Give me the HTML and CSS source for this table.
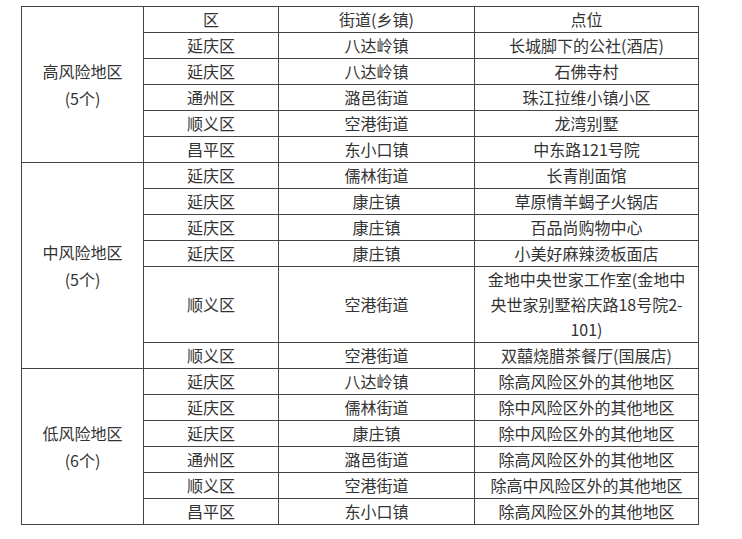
FILE: index.html
```html
<!DOCTYPE html>
<html lang="zh-CN">
<head>
<meta charset="utf-8">
<link rel="stylesheet" href="styles.css">
</head>
<body>
<div class="wrap">
<table class="risk">
<colgroup>
<col class="c1"><col class="c2"><col class="c3"><col class="c4">
</colgroup>
<tbody>
<tr><td rowspan="6" class="level">高风险地区<br>(5个)</td><td>区</td><td>街道(乡镇)</td><td>点位</td></tr>
<tr><td>延庆区</td><td>八达岭镇</td><td>长城脚下的公社(酒店)</td></tr>
<tr><td>延庆区</td><td>八达岭镇</td><td>石佛寺村</td></tr>
<tr><td>通州区</td><td>潞邑街道</td><td>珠江拉维小镇小区</td></tr>
<tr><td>顺义区</td><td>空港街道</td><td>龙湾别墅</td></tr>
<tr><td>昌平区</td><td>东小口镇</td><td>中东路121号院</td></tr>
<tr><td rowspan="6" class="level">中风险地区<br>(5个)</td><td>延庆区</td><td>儒林街道</td><td>长青削面馆</td></tr>
<tr><td>延庆区</td><td>康庄镇</td><td>草原情羊蝎子火锅店</td></tr>
<tr><td>延庆区</td><td>康庄镇</td><td>百品尚购物中心</td></tr>
<tr><td>延庆区</td><td>康庄镇</td><td>小美好麻辣烫板面店</td></tr>
<tr><td>顺义区</td><td>空港街道</td><td>金地中央世家工作室(金地中央世家别墅裕庆路18号院2-101)</td></tr>
<tr><td>顺义区</td><td>空港街道</td><td>双囍烧腊茶餐厅(国展店)</td></tr>
<tr><td rowspan="6" class="level">低风险地区<br>(6个)</td><td>延庆区</td><td>八达岭镇</td><td>除高风险区外的其他地区</td></tr>
<tr><td>延庆区</td><td>儒林街道</td><td>除中风险区外的其他地区</td></tr>
<tr><td>延庆区</td><td>康庄镇</td><td>除中风险区外的其他地区</td></tr>
<tr><td>通州区</td><td>潞邑街道</td><td>除高风险区外的其他地区</td></tr>
<tr><td>顺义区</td><td>空港街道</td><td>除高中风险区外的其他地区</td></tr>
<tr><td>昌平区</td><td>东小口镇</td><td>除高风险区外的其他地区</td></tr>
</tbody>
</table>
</div>
</body>
</html>
```
FILE: styles.css
```css
html, body {
  margin: 0;
  padding: 0;
  background: #ffffff;
}
.wrap {
  padding: 6px 0 0 21px;
}
.risk {
  border-collapse: collapse;
  table-layout: fixed;
  width: 677px;
  font-family: "Noto Sans CJK SC", "Noto Sans", sans-serif;
  font-size: 16px;
  color: #333333;
}
.c1 { width: 122px; }
.c2 { width: 135px; }
.c3 { width: 196px; }
.c4 { width: 224px; }
.risk td {
  border: 1px solid #444444;
  padding: 0 5px;
  height: 25px;
  line-height: 25px;
  text-align: center;
  vertical-align: middle;
}
.risk td.level {
  line-height: 27px;
}
```
